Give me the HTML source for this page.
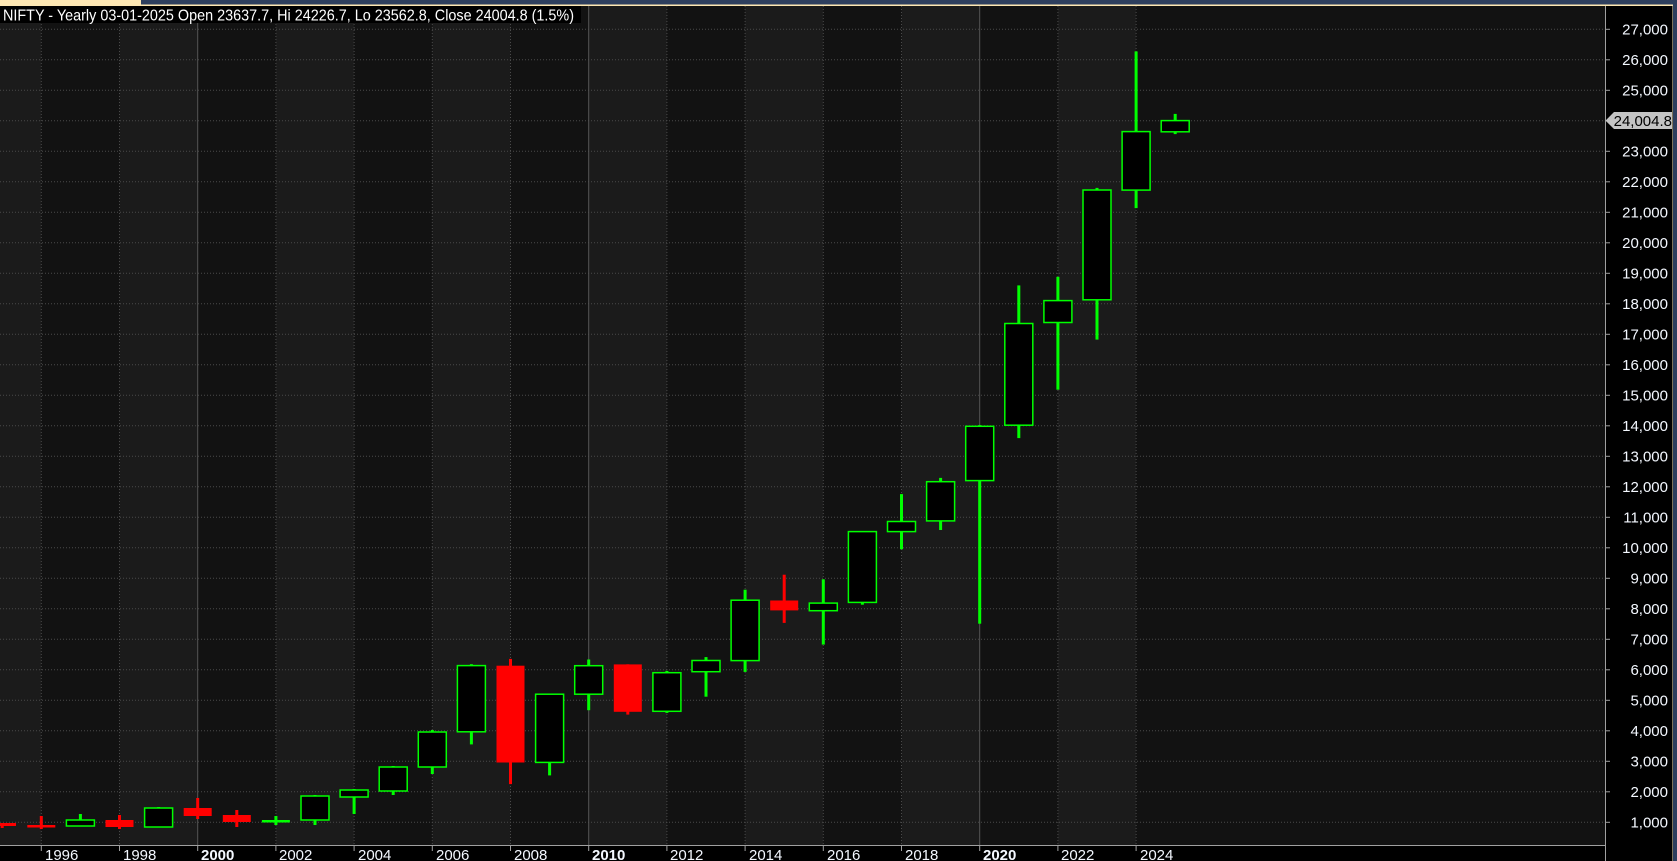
<!DOCTYPE html>
<html><head><meta charset="utf-8"><style>
html,body{margin:0;padding:0;background:#000;width:1677px;height:861px;overflow:hidden}
svg{display:block}
text{font-family:"Liberation Sans",Arial,sans-serif}
</style></head><body>
<svg width="1677" height="861" viewBox="0 0 1677 861" xmlns="http://www.w3.org/2000/svg">
<rect x="0" y="0" width="1677" height="861" fill="#000"/>
<rect x="0" y="0" width="1677" height="5" fill="#2e3f5e"/>
<rect x="0" y="0" width="141" height="5" fill="#fde7b3"/>
<rect x="0" y="4.5" width="1677" height="1.5" fill="#fde7b3"/>
<rect x="1673" y="0" width="4" height="861" fill="#2e3f5e"/>
<rect x="1672" y="5" width="1" height="856" fill="#fde7b3"/>
<rect x="0" y="6" width="1605" height="839" fill="#121212"/>
<g fill="#1b1b1b">
<rect x="0" y="6" width="41.3" height="839"/>
<rect x="119.5" y="6" width="78.2" height="839"/>
<rect x="275.9" y="6" width="78.2" height="839"/>
<rect x="432.3" y="6" width="78.2" height="839"/>
<rect x="588.7" y="6" width="78.2" height="839"/>
<rect x="745.1" y="6" width="78.2" height="839"/>
<rect x="901.5" y="6" width="78.2" height="839"/>
<rect x="1057.9" y="6" width="78.2" height="839"/>
</g>
<g stroke="#4a4a4a" stroke-width="1" stroke-dasharray="1,2">
<line x1="0" x2="1605" y1="822.3" y2="822.3"/><line x1="0" x2="1605" y1="791.8" y2="791.8"/><line x1="0" x2="1605" y1="761.3" y2="761.3"/><line x1="0" x2="1605" y1="730.8" y2="730.8"/><line x1="0" x2="1605" y1="700.3" y2="700.3"/><line x1="0" x2="1605" y1="669.8" y2="669.8"/><line x1="0" x2="1605" y1="639.3" y2="639.3"/><line x1="0" x2="1605" y1="608.8" y2="608.8"/><line x1="0" x2="1605" y1="578.3" y2="578.3"/><line x1="0" x2="1605" y1="547.8" y2="547.8"/><line x1="0" x2="1605" y1="517.3" y2="517.3"/><line x1="0" x2="1605" y1="486.8" y2="486.8"/><line x1="0" x2="1605" y1="456.3" y2="456.3"/><line x1="0" x2="1605" y1="425.8" y2="425.8"/><line x1="0" x2="1605" y1="395.3" y2="395.3"/><line x1="0" x2="1605" y1="364.8" y2="364.8"/><line x1="0" x2="1605" y1="334.3" y2="334.3"/><line x1="0" x2="1605" y1="303.8" y2="303.8"/><line x1="0" x2="1605" y1="273.3" y2="273.3"/><line x1="0" x2="1605" y1="242.8" y2="242.8"/><line x1="0" x2="1605" y1="212.3" y2="212.3"/><line x1="0" x2="1605" y1="181.8" y2="181.8"/><line x1="0" x2="1605" y1="151.3" y2="151.3"/><line x1="0" x2="1605" y1="120.8" y2="120.8"/><line x1="0" x2="1605" y1="90.3" y2="90.3"/><line x1="0" x2="1605" y1="59.8" y2="59.8"/><line x1="0" x2="1605" y1="29.3" y2="29.3"/>
</g>
<g stroke="#4a4a4a" stroke-width="1" stroke-dasharray="1,2">
<line x1="41.3" x2="41.3" y1="6" y2="845"/><line x1="119.5" x2="119.5" y1="6" y2="845"/><line x1="275.9" x2="275.9" y1="6" y2="845"/><line x1="354.1" x2="354.1" y1="6" y2="845"/><line x1="432.3" x2="432.3" y1="6" y2="845"/><line x1="510.5" x2="510.5" y1="6" y2="845"/><line x1="666.9" x2="666.9" y1="6" y2="845"/><line x1="745.1" x2="745.1" y1="6" y2="845"/><line x1="823.3" x2="823.3" y1="6" y2="845"/><line x1="901.5" x2="901.5" y1="6" y2="845"/><line x1="1057.9" x2="1057.9" y1="6" y2="845"/><line x1="1136.1" x2="1136.1" y1="6" y2="845"/>
</g>
<g stroke="#555" stroke-width="1">
<line x1="197.7" x2="197.7" y1="6" y2="845"/><line x1="588.7" x2="588.7" y1="6" y2="845"/><line x1="979.7" x2="979.7" y1="6" y2="845"/>
</g>
<g fill="#ff0000">
<rect x="0.7" y="823" width="3" height="5"/><rect x="-12" y="823" width="28" height="3"/>
<rect x="39.8" y="816" width="3" height="13"/><rect x="27.3" y="825" width="28" height="2.5"/>
<rect x="118" y="815" width="3" height="14"/><rect x="105.5" y="820" width="28" height="7"/>
<rect x="196.2" y="798" width="3" height="21"/><rect x="183.7" y="808" width="28" height="8"/>
<rect x="235.3" y="810" width="3" height="17"/><rect x="222.8" y="815" width="28" height="7"/>
<rect x="509" y="658.9" width="3" height="125.2"/><rect x="496.5" y="665.7" width="28" height="96.8"/>
<rect x="626.3" y="664.3" width="3" height="50.3"/><rect x="613.8" y="664.4" width="28" height="47.4"/>
<rect x="782.7" y="574.7" width="3" height="48.2"/><rect x="770.2" y="600.5" width="28" height="9.9"/>
</g>
<g fill="#00ff00">
<rect x="78.9" y="814" width="3" height="12"/>
<rect x="157.1" y="807" width="3" height="20"/>
<rect x="274.4" y="816" width="3" height="9"/><rect x="261.9" y="820" width="28" height="2.5"/>
<rect x="313.5" y="795" width="3" height="30"/>
<rect x="352.6" y="789" width="3" height="25"/>
<rect x="391.7" y="766" width="3" height="29"/>
<rect x="430.8" y="730" width="3" height="44"/>
<rect x="469.9" y="664.2" width="3" height="80.2"/>
<rect x="548.1" y="693.6" width="3" height="81.8"/>
<rect x="587.2" y="659.5" width="3" height="50.7"/>
<rect x="665.4" y="670.9" width="3" height="42"/>
<rect x="704.5" y="657.1" width="3" height="39.6"/>
<rect x="743.6" y="589.7" width="3" height="82.2"/>
<rect x="821.8" y="579.3" width="3" height="65.3"/>
<rect x="860.9" y="531" width="3" height="73.7"/>
<rect x="900" y="494.1" width="3" height="55.2"/>
<rect x="939.1" y="477.9" width="3" height="52.1"/>
<rect x="978.2" y="425.1" width="3" height="198.6"/>
<rect x="1017.3" y="285.4" width="3" height="152.7"/>
<rect x="1056.4" y="276.8" width="3" height="112.9"/>
<rect x="1095.5" y="187.9" width="3" height="151.7"/>
<rect x="1134.6" y="51.4" width="3" height="156.7"/>
<rect x="1173.7" y="113.9" width="3" height="20.2"/>
</g>
<g fill="#000" stroke="#00ff00" stroke-width="1.5">
<rect x="66.4" y="820" width="28" height="6"/>
<rect x="144.6" y="808" width="28" height="19"/>
<rect x="301" y="796" width="28" height="24"/>
<rect x="340.1" y="790" width="28" height="7"/>
<rect x="379.2" y="767" width="28" height="24"/>
<rect x="418.3" y="732" width="28" height="35"/>
<rect x="457.4" y="665.6" width="28" height="66.2"/>
<rect x="535.6" y="694.2" width="28" height="68.2"/>
<rect x="574.7" y="665.7" width="28" height="28.5"/>
<rect x="652.9" y="672.7" width="28" height="38.6"/>
<rect x="692" y="660.5" width="28" height="11.2"/>
<rect x="731.1" y="600.2" width="28" height="60.4"/>
<rect x="809.3" y="603.1" width="28" height="7.6"/>
<rect x="848.4" y="531.6" width="28" height="70.8"/>
<rect x="887.5" y="521.5" width="28" height="10.1"/>
<rect x="926.6" y="481.7" width="28" height="39.2"/>
<rect x="965.7" y="426.3" width="28" height="54.3"/>
<rect x="1004.8" y="323.5" width="28" height="101.7"/>
<rect x="1043.9" y="300.6" width="28" height="21.9"/>
<rect x="1083" y="190" width="28" height="109.8"/>
<rect x="1122.1" y="131.6" width="28" height="58.5"/>
<rect x="1161.2" y="120.6" width="28" height="11.2"/>
</g>
<rect x="0" y="6" width="581" height="17" fill="#000"/>
<text x="3" y="20.5" font-size="16" fill="#fff" textLength="571" lengthAdjust="spacingAndGlyphs">NIFTY - Yearly 03-01-2025 Open 23637.7, Hi 24226.7, Lo 23562.8, Close 24004.8 (1.5%)</text>
<rect x="0" y="845.5" width="1605" height="16" fill="#000"/>
<line x1="0" x2="1605" y1="845.5" y2="845.5" stroke="#a0a0a0" stroke-width="1"/>
<rect x="1605.5" y="6" width="67" height="855" fill="#000"/>
<line x1="1605.5" x2="1605.5" y1="6" y2="861" stroke="#a0a0a0" stroke-width="1"/>
<g stroke="#a0a0a0" stroke-width="1">
<line x1="41.3" x2="41.3" y1="845" y2="851"/><line x1="119.5" x2="119.5" y1="845" y2="851"/><line x1="197.7" x2="197.7" y1="845" y2="851"/><line x1="275.9" x2="275.9" y1="845" y2="851"/><line x1="354.1" x2="354.1" y1="845" y2="851"/><line x1="432.3" x2="432.3" y1="845" y2="851"/><line x1="510.5" x2="510.5" y1="845" y2="851"/><line x1="588.7" x2="588.7" y1="845" y2="851"/><line x1="666.9" x2="666.9" y1="845" y2="851"/><line x1="745.1" x2="745.1" y1="845" y2="851"/><line x1="823.3" x2="823.3" y1="845" y2="851"/><line x1="901.5" x2="901.5" y1="845" y2="851"/><line x1="979.7" x2="979.7" y1="845" y2="851"/><line x1="1057.9" x2="1057.9" y1="845" y2="851"/><line x1="1136.1" x2="1136.1" y1="845" y2="851"/>
</g>
<g font-size="15" fill="#f4f8ff">
<text x="45" y="860">1996</text><text x="123" y="860">1998</text><text x="201" y="860" font-weight="bold">2000</text><text x="279" y="860">2002</text><text x="358" y="860">2004</text><text x="436" y="860">2006</text><text x="514" y="860">2008</text><text x="592" y="860" font-weight="bold">2010</text><text x="670" y="860">2012</text><text x="749" y="860">2014</text><text x="827" y="860">2016</text><text x="905" y="860">2018</text><text x="983" y="860" font-weight="bold">2020</text><text x="1061" y="860">2022</text><text x="1140" y="860">2024</text>
</g>
<g stroke="#a0a0a0" stroke-width="1">
<line x1="1605" x2="1610" y1="822.3" y2="822.3"/><line x1="1605" x2="1610" y1="791.8" y2="791.8"/><line x1="1605" x2="1610" y1="761.3" y2="761.3"/><line x1="1605" x2="1610" y1="730.8" y2="730.8"/><line x1="1605" x2="1610" y1="700.3" y2="700.3"/><line x1="1605" x2="1610" y1="669.8" y2="669.8"/><line x1="1605" x2="1610" y1="639.3" y2="639.3"/><line x1="1605" x2="1610" y1="608.8" y2="608.8"/><line x1="1605" x2="1610" y1="578.3" y2="578.3"/><line x1="1605" x2="1610" y1="547.8" y2="547.8"/><line x1="1605" x2="1610" y1="517.3" y2="517.3"/><line x1="1605" x2="1610" y1="486.8" y2="486.8"/><line x1="1605" x2="1610" y1="456.3" y2="456.3"/><line x1="1605" x2="1610" y1="425.8" y2="425.8"/><line x1="1605" x2="1610" y1="395.3" y2="395.3"/><line x1="1605" x2="1610" y1="364.8" y2="364.8"/><line x1="1605" x2="1610" y1="334.3" y2="334.3"/><line x1="1605" x2="1610" y1="303.8" y2="303.8"/><line x1="1605" x2="1610" y1="273.3" y2="273.3"/><line x1="1605" x2="1610" y1="242.8" y2="242.8"/><line x1="1605" x2="1610" y1="212.3" y2="212.3"/><line x1="1605" x2="1610" y1="181.8" y2="181.8"/><line x1="1605" x2="1610" y1="151.3" y2="151.3"/><line x1="1605" x2="1610" y1="90.3" y2="90.3"/><line x1="1605" x2="1610" y1="59.8" y2="59.8"/><line x1="1605" x2="1610" y1="29.3" y2="29.3"/>
</g>
<g font-size="15" fill="#f4f8ff" text-anchor="end">
<text x="1668" y="827.5">1,000</text><text x="1668" y="797">2,000</text><text x="1668" y="766.5">3,000</text><text x="1668" y="736">4,000</text><text x="1668" y="705.5">5,000</text><text x="1668" y="675">6,000</text><text x="1668" y="644.5">7,000</text><text x="1668" y="614">8,000</text><text x="1668" y="583.5">9,000</text><text x="1668" y="553">10,000</text><text x="1668" y="522.5">11,000</text><text x="1668" y="492">12,000</text><text x="1668" y="461.5">13,000</text><text x="1668" y="431">14,000</text><text x="1668" y="400.5">15,000</text><text x="1668" y="370">16,000</text><text x="1668" y="339.5">17,000</text><text x="1668" y="309">18,000</text><text x="1668" y="278.5">19,000</text><text x="1668" y="248">20,000</text><text x="1668" y="217.5">21,000</text><text x="1668" y="187">22,000</text><text x="1668" y="156.5">23,000</text><text x="1668" y="95.5">25,000</text><text x="1668" y="65">26,000</text><text x="1668" y="34.5">27,000</text>
</g>
<polygon points="1605.5,120.6 1614,112 1672,112 1672,129 1614,129" fill="#c4c4c4"/>
<text x="1672" y="126" font-size="15" fill="#000" text-anchor="end">24,004.8</text>
</svg>
</body></html>
